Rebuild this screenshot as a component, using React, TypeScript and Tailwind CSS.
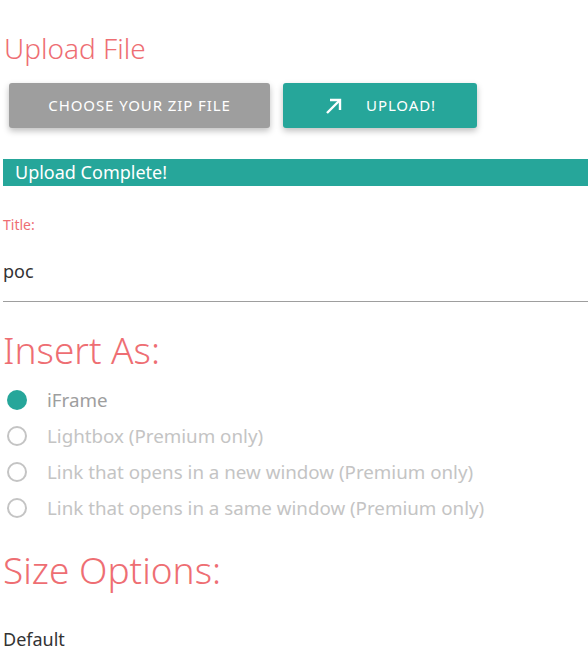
import React from "react";

const options = [
  { label: "iFrame", checked: true },
  { label: "Lightbox (Premium only)", checked: false },
  { label: "Link that opens in a new window (Premium only)", checked: false },
  { label: "Link that opens in a same window (Premium only)", checked: false },
];

const ArrowIcon = () => (
  <svg width="20" height="20" viewBox="0 0 20 20" fill="none" stroke="currentColor" strokeWidth="2.4">
    <path d="M3 17 L16 4" />
    <path d="M6 4 H16 V14" />
  </svg>
);

export default function App() {
  return (
    <div className="bg-white min-h-screen pl-[3px] text-[#333]" style={{ fontFamily: '"Noto Sans", "Open Sans", sans-serif' }}>
      {/* Upload heading */}
      <h2 className="pt-[30px] text-[28px] leading-[36px] font-light text-[#ee6e73] pl-px">Upload File</h2>

      <div className="flex gap-[13px] pl-[6px] mt-[17px]">
        <button className="w-[261px] h-[45px] rounded-[3px] bg-[#9e9e9e] text-white text-[15px] tracking-[0.9px] uppercase shadow-[0_3px_6px_rgba(0,0,0,0.25)]">
          Choose your zip file
        </button>
        <button className="w-[194px] h-[45px] rounded-[3px] bg-[#26a69a] text-white text-[15px] tracking-[0.9px] uppercase shadow-[0_3px_6px_rgba(0,0,0,0.25)] flex items-center justify-center gap-[22px]">
          <ArrowIcon />
          Upload!
        </button>
      </div>

      {/* Status bar */}
      <div className="mt-[31px] h-[27px] bg-[#26a69a] text-white text-[18px] leading-[27px] pl-[12px]">
        Upload Complete!
      </div>

      {/* Title field */}
      <label className="block mt-[29px] text-[14px] leading-[20px] text-[#ee6e73]">Title:</label>
      <div className="mt-[24px] border-b border-[#9e9e9e] pb-[18px] text-[18px] leading-[24px] text-[#333]">poc</div>

      {/* Insert As */}
      <h3 className="mt-[26px] text-[37px] leading-[44px] font-light text-[#ee6e73]">Insert As:</h3>
      <div className="mt-[10px] flex flex-col">
        {options.map((o) => (
          <div key={o.label} className="flex items-center h-[36px]">
            <span className="w-[28px] flex justify-center">
              {o.checked ? (
                <span className="w-[20px] h-[20px] rounded-full bg-[#26a69a]" />
              ) : (
                <span className="w-[20px] h-[20px] rounded-full border-2 border-[#c4c4c4]" />
              )}
            </span>
            <span className={`ml-[16px] text-[18.75px] ${o.checked ? "text-[#9e9e9e]" : "text-[#c4c4c4]"}`}>{o.label}</span>
          </div>
        ))}
      </div>

      {/* Size Options */}
      <h3 className="mt-[22px] text-[37px] leading-[44px] font-light text-[#ee6e73]">Size Options:</h3>
      <div className="mt-[35px] text-[18px] leading-[24px] text-[#333]">Default</div>
    </div>
  );
}
